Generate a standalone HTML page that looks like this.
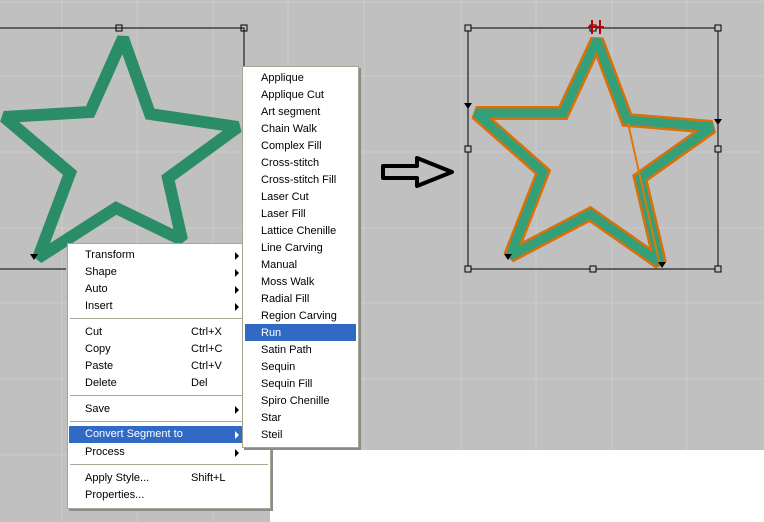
<!DOCTYPE html>
<html><head><style>
html,body{margin:0;padding:0;width:764px;height:522px;overflow:hidden;background:#c0c0c0;font-family:"Liberation Sans",Tahoma,sans-serif;}
.menu{position:absolute;background:#fff;border:1px solid #a8a597;box-shadow:2px 2px 0 #8c8c8c;font-size:11px;color:#000}
.it{position:absolute;left:0;right:0;height:17px;line-height:17px}
.it span{position:absolute}
.hl{background:#316ac5;color:#fff}
.sep{position:absolute;height:1px;background:#aca899}
.ar{position:absolute;left:167px;top:5px;width:0;height:0;border-left:4px solid #000;border-top:4px solid transparent;border-bottom:4px solid transparent}
.hl .ar{border-left-color:#fff;left:166px}
</style></head><body>
<svg width="764" height="522" style="position:absolute;left:0;top:0">
<g stroke="#cdcdcd" stroke-width="1">
<line x1="62" y1="0" x2="62" y2="522"/><line x1="137" y1="0" x2="137" y2="522"/><line x1="213" y1="0" x2="213" y2="522"/><line x1="288" y1="0" x2="288" y2="522"/><line x1="364" y1="0" x2="364" y2="522"/>
<line x1="461" y1="0" x2="461" y2="522"/><line x1="536" y1="0" x2="536" y2="522"/><line x1="612" y1="0" x2="612" y2="522"/><line x1="687" y1="0" x2="687" y2="522"/>
<line x1="0" y1="2" x2="764" y2="2"/><line x1="0" y1="76" x2="764" y2="76"/><line x1="0" y1="152" x2="764" y2="152"/><line x1="0" y1="228" x2="764" y2="228"/><line x1="0" y1="303" x2="764" y2="303"/><line x1="0" y1="379" x2="764" y2="379"/><line x1="0" y1="455" x2="764" y2="455"/>
</g>
<rect x="270" y="450" width="494" height="72" fill="#fff"/>
<!-- left -->
<path d="M0 28H244V70M0 269H66" fill="none" stroke="#000"/>
<rect x="116" y="25" width="6" height="6" fill="none" stroke="#000"/><rect x="241" y="25" width="6" height="6" fill="none" stroke="#000"/>
<polygon points="123,38 150,114 238,127 168,178 182,240 116,208 38,258 70,173 4,117 90,112" fill="none" stroke="#2b8c68" stroke-width="12" stroke-linejoin="miter" stroke-miterlimit="1.6"/>
<polygon points="30,254 38,254 34,260" fill="#000"/>
<!-- arrow -->
<path d="M383 166H417V158L452 172L417 186V178H383Z" fill="none" stroke="#000" stroke-width="4" stroke-linejoin="round"/>
<!-- right -->
<rect x="468" y="28" width="250" height="241" fill="none" stroke="#000"/>
<polygon points="597,40 563,113 476,113 543,172 510,256 590,214 660,263 640,178 712,127 627,120" fill="none" stroke="#d9700a" stroke-width="14" stroke-linejoin="miter" stroke-miterlimit="1.6"/>
<polygon points="597,40 563,113 476,113 543,172 510,256 590,214 660,263 640,178 712,127 627,120" fill="none" stroke="#33a07a" stroke-width="9" stroke-linejoin="miter" stroke-miterlimit="1.6"/>
<line x1="628" y1="123" x2="660" y2="266" stroke="#e07808" stroke-width="2"/>
<g fill="#c0c0c0" stroke="#000">
<rect x="465" y="25" width="6" height="6"/><rect x="590" y="25" width="6" height="6"/><rect x="715" y="25" width="6" height="6"/>
<rect x="465" y="146" width="6" height="6"/><rect x="715" y="146" width="6" height="6"/>
<rect x="465" y="266" width="6" height="6"/><rect x="590" y="266" width="6" height="6"/><rect x="715" y="266" width="6" height="6"/>
</g>
<g fill="#000"><polygon points="464,103 472,103 468,109"/><polygon points="714,119 722,119 718,125"/><polygon points="504,254 512,254 508,260"/><polygon points="658,262 666,262 662,268"/></g>
<g stroke="#c00000" stroke-width="2"><line x1="592" y1="20" x2="592" y2="34"/><line x1="600" y1="20" x2="600" y2="34"/><line x1="588" y1="27" x2="604" y2="27"/></g>
</svg>

<div class="menu" style="left:67px;top:243px;width:202px;height:264px">
<div class="it" style="top:3px"><span style="left:17px">Transform</span><i class="ar"></i></div>
<div class="it" style="top:20px"><span style="left:17px">Shape</span><i class="ar"></i></div>
<div class="it" style="top:37px"><span style="left:17px">Auto</span><i class="ar"></i></div>
<div class="it" style="top:54px"><span style="left:17px">Insert</span><i class="ar"></i></div>
<div class="sep" style="top:74px;left:2px;right:2px"></div>
<div class="it" style="top:80px"><span style="left:17px">Cut</span><span style="left:123px">Ctrl+X</span></div>
<div class="it" style="top:97px"><span style="left:17px">Copy</span><span style="left:123px">Ctrl+C</span></div>
<div class="it" style="top:114px"><span style="left:17px">Paste</span><span style="left:123px">Ctrl+V</span></div>
<div class="it" style="top:131px"><span style="left:17px">Delete</span><span style="left:123px">Del</span></div>
<div class="sep" style="top:151px;left:2px;right:2px"></div>
<div class="it" style="top:157px"><span style="left:17px">Save</span><i class="ar"></i></div>
<div class="sep" style="top:177px;left:2px;right:2px"></div>
<div class="it hl" style="top:182px;left:1px;right:27px"><span style="left:16px">Convert Segment to</span><i class="ar"></i></div>
<div class="it" style="top:200px"><span style="left:17px">Process</span><i class="ar"></i></div>
<div class="sep" style="top:220px;left:2px;right:2px"></div>
<div class="it" style="top:226px"><span style="left:17px">Apply Style...</span><span style="left:123px">Shift+L</span></div>
<div class="it" style="top:243px"><span style="left:17px">Properties...</span></div>
</div>

<div class="menu" style="left:242px;top:66px;width:115px;height:380px">
<div class="it" style="top:3px"><span style="left:18px">Applique</span></div>
<div class="it" style="top:20px"><span style="left:18px">Applique Cut</span></div>
<div class="it" style="top:37px"><span style="left:18px">Art segment</span></div>
<div class="it" style="top:54px"><span style="left:18px">Chain Walk</span></div>
<div class="it" style="top:71px"><span style="left:18px">Complex Fill</span></div>
<div class="it" style="top:88px"><span style="left:18px">Cross-stitch</span></div>
<div class="it" style="top:105px"><span style="left:18px">Cross-stitch Fill</span></div>
<div class="it" style="top:122px"><span style="left:18px">Laser Cut</span></div>
<div class="it" style="top:139px"><span style="left:18px">Laser Fill</span></div>
<div class="it" style="top:156px"><span style="left:18px">Lattice Chenille</span></div>
<div class="it" style="top:173px"><span style="left:18px">Line Carving</span></div>
<div class="it" style="top:190px"><span style="left:18px">Manual</span></div>
<div class="it" style="top:207px"><span style="left:18px">Moss Walk</span></div>
<div class="it" style="top:224px"><span style="left:18px">Radial Fill</span></div>
<div class="it" style="top:241px"><span style="left:18px">Region Carving</span></div>
<div class="it hl" style="top:257px;left:2px;right:2px"><span style="left:16px;top:1px">Run</span></div>
<div class="it" style="top:275px"><span style="left:18px">Satin Path</span></div>
<div class="it" style="top:292px"><span style="left:18px">Sequin</span></div>
<div class="it" style="top:309px"><span style="left:18px">Sequin Fill</span></div>
<div class="it" style="top:326px"><span style="left:18px">Spiro Chenille</span></div>
<div class="it" style="top:343px"><span style="left:18px">Star</span></div>
<div class="it" style="top:360px"><span style="left:18px">Steil</span></div>
</div>
</body></html>
